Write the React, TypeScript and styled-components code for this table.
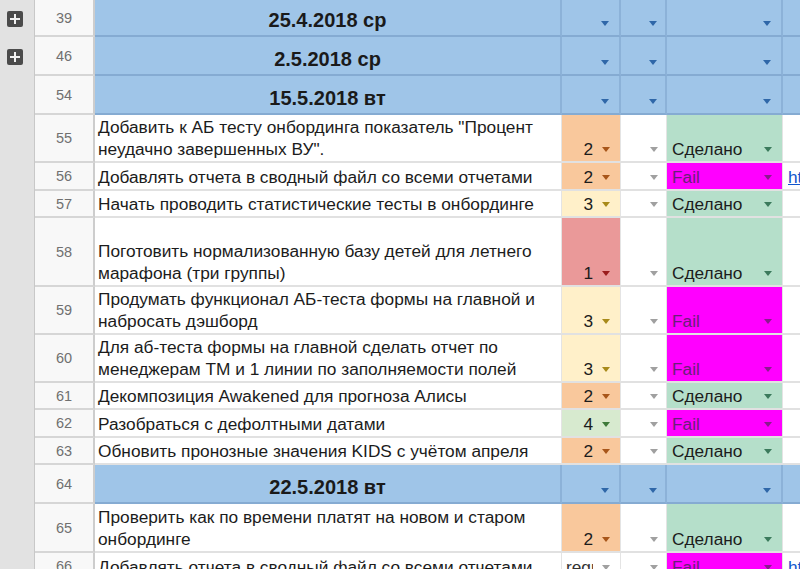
import React from "react";
import styled, { createGlobalStyle } from "styled-components";

const GlobalStyle = createGlobalStyle`
  html, body { margin: 0; padding: 0; background: #ffffff; overflow: hidden; }
  body { font-family: "Liberation Sans", Arial, sans-serif; color: #1c1c1c; }
  * { box-sizing: border-box; }
`;

const COLS = "35px 60px 467px 59px 46px 116px 1fr";

const Sheet = styled.div`
  width: 800px;
  height: 569px;
  overflow: hidden;
  display: flex;
  flex-direction: column;
`;

const Row = styled.div<{ $h: number }>`
  display: grid;
  grid-template-columns: ${COLS};
  height: ${(p) => p.$h}px;
  flex: none;
`;

const Gutter = styled.div`
  background: #e2e2e2;
  border-right: 1px solid #c8c8c8;
  display: flex;
  align-items: center;
  padding-left: 7px;
`;

const PlusButton = styled.div`
  width: 16px;
  height: 16px;
  border-radius: 2px;
  background: #4b4b4b;
  position: relative;
  &::before,
  &::after {
    content: "";
    position: absolute;
    background: #f2f2f2;
    left: 50%;
    top: 50%;
    transform: translate(-50%, -50%);
  }
  &::before { width: 10px; height: 2px; }
  &::after { width: 2px; height: 10px; }
`;

const RowNum = styled.div`
  background: #f8f8f8;
  border-right: 2px solid #cdcdcd;
  border-bottom: 2px solid #d6d6d6;
  color: #707070;
  font-size: 14.5px;
  display: flex;
  align-items: center;
  justify-content: center;
`;

const Cell = styled.div<{ $bg?: string; $blue?: boolean }>`
  background: ${(p) => (p.$blue ? "#9fc5e8" : p.$bg || "#ffffff")};
  border-bottom: 2px solid ${(p) => (p.$blue ? "#85abd2" : "#e1e1e1")};
  border-right: ${(p) => (p.$blue ? "2px solid #8cb2d8" : "1px solid #e4e4e4")};
  font-size: 17.3px;
  line-height: 22px;
  display: flex;
  align-items: flex-end;
  padding-bottom: 1px;
  overflow: hidden;
  min-width: 0;
`;

const TaskCell = styled(Cell)`
  padding-left: 3px;
  padding-right: 4px;
`;

const TaskText = styled.span`
  display: block;
`;

const DateCell = styled(Cell)`
  justify-content: center;
  font-size: 20px;
  line-height: 23px;
  font-weight: bold;
  color: #1a1a1a;
  padding-bottom: 3px;
`;

const PriorityCell = styled(Cell)`
  justify-content: flex-end;
  padding-right: 10px;
  padding-left: 4px;
  gap: 9px;
`;

const PlainCell = styled(Cell)`
  justify-content: flex-end;
  padding-right: 8px;
`;

const StatusCell = styled(Cell)<{ $fail?: boolean }>`
  justify-content: space-between;
  padding-left: 5px;
  padding-right: 10px;
  color: ${(p) => (p.$fail ? "#6a1f78" : "#1c1c1c")};
`;

const LinkCell = styled(Cell)`
  border-right: none;
  padding-left: 5px;
`;

const Link = styled.span`
  color: #1155cc;
  text-decoration: underline;
  white-space: nowrap;
`;

const Clip = styled.span`
  overflow: hidden;
  white-space: nowrap;
  flex: 1;
  min-width: 0;
  color: #333;
`;

const Caret = styled.span<{ $c: string }>`
  flex: none;
  width: 0;
  height: 0;
  border-left: 4.5px solid transparent;
  border-right: 4.5px solid transparent;
  border-top: 5px solid ${(p) => p.$c};
  margin-bottom: 8px;
`;

const BlueCaret = styled(Caret)`
  margin-bottom: 8px;
`;

type Pri = "1" | "2" | "3" | "4" | "reg";

const PRI: Record<Pri, { bg: string; caret: string }> = {
  "1": { bg: "#ea9999", caret: "#9b1c1c" },
  "2": { bg: "#f9c89c", caret: "#a8561a" },
  "3": { bg: "#fff0c9", caret: "#a88a1a" },
  "4": { bg: "#d7eacf", caret: "#3f7a3a" },
  reg: { bg: "#ffffff", caret: "#a0a0a0" },
};

type Status = "done" | "fail";

type Item =
  | { kind: "date"; n: number; h: number; text: string; plus?: boolean }
  | {
      kind: "task";
      n: number;
      h: number;
      text: string;
      pri: Pri;
      status: Status;
      link?: boolean;
    };

const ROWS: Item[] = [
  { kind: "date", n: 39, h: 37, text: "25.4.2018 ср", plus: true },
  { kind: "date", n: 46, h: 39, text: "2.5.2018 ср", plus: true },
  { kind: "date", n: 54, h: 39, text: "15.5.2018 вт" },
  {
    kind: "task",
    n: 55,
    h: 48,
    text: "Добавить к АБ тесту онбординга показатель \"Процент неудачно завершенных ВУ\".",
    pri: "2",
    status: "done",
  },
  { kind: "task", n: 56, h: 28, text: "Добавлять отчета в сводный файл со всеми отчетами", pri: "2", status: "fail", link: true },
  { kind: "task", n: 57, h: 27, text: "Начать проводить статистические тесты в онбординге", pri: "3", status: "done" },
  {
    kind: "task",
    n: 58,
    h: 69,
    text: "Поготовить нормализованную базу детей для летнего марафона (три группы)",
    pri: "1",
    status: "done",
  },
  {
    kind: "task",
    n: 59,
    h: 48,
    text: "Продумать функционал АБ-теста формы на главной и набросать дэшборд",
    pri: "3",
    status: "fail",
  },
  {
    kind: "task",
    n: 60,
    h: 48,
    text: "Для аб-теста формы на главной сделать отчет по менеджерам ТМ и 1 линии по заполняемости полей",
    pri: "3",
    status: "fail",
  },
  { kind: "task", n: 61, h: 27, text: "Декомпозиция Awakened для прогноза Алисы", pri: "2", status: "done" },
  { kind: "task", n: 62, h: 28, text: "Разобраться с дефолтными датами", pri: "4", status: "fail" },
  { kind: "task", n: 63, h: 27, text: "Обновить пронозные значения KIDS с учётом апреля", pri: "2", status: "done" },
  { kind: "date", n: 64, h: 39, text: "22.5.2018 вт" },
  {
    kind: "task",
    n: 65,
    h: 49,
    text: "Проверить как по времени платят на новом и старом онбординге",
    pri: "2",
    status: "done",
  },
  { kind: "task", n: 66, h: 28, text: "Добавлять отчета в сводный файл со всеми отчетами", pri: "reg", status: "fail", link: true },
];

const STATUS: Record<Status, { bg: string; caret: string; label: string }> = {
  done: { bg: "#b5dfca", caret: "#3b7a5c", label: "Сделано" },
  fail: { bg: "#ff00ff", caret: "#8a1a8e", label: "Fail" },
};

function DateRow({ item }: { item: Extract<Item, { kind: "date" }> }) {
  return (
    <Row $h={item.h}>
      <Gutter>{item.plus && <PlusButton />}</Gutter>
      <RowNum>{item.n}</RowNum>
      <DateCell $blue>{item.text}</DateCell>
      <PriorityCell $blue>
        <BlueCaret $c="#2f67a8" />
      </PriorityCell>
      <PlainCell $blue>
        <BlueCaret $c="#2f67a8" />
      </PlainCell>
      <StatusCell $blue>
        <span />
        <BlueCaret $c="#2f67a8" />
      </StatusCell>
      <LinkCell $blue />
    </Row>
  );
}

function TaskRow({ item }: { item: Extract<Item, { kind: "task" }> }) {
  const p = PRI[item.pri];
  const s = STATUS[item.status];
  return (
    <Row $h={item.h}>
      <Gutter />
      <RowNum>{item.n}</RowNum>
      <TaskCell>
        <TaskText>{item.text}</TaskText>
      </TaskCell>
      <PriorityCell $bg={p.bg}>
        {item.pri === "reg" ? <Clip>regular</Clip> : <span>{item.pri}</span>}
        <Caret $c={p.caret} />
      </PriorityCell>
      <PlainCell>
        <Caret $c="#a0a0a0" />
      </PlainCell>
      <StatusCell $bg={s.bg} $fail={item.status === "fail"}>
        <span>{s.label}</span>
        <Caret $c={s.caret} />
      </StatusCell>
      <LinkCell>{item.link && <Link>https://</Link>}</LinkCell>
    </Row>
  );
}

export default function App() {
  return (
    <>
      <GlobalStyle />
      <Sheet>
        {ROWS.map((r) =>
          r.kind === "date" ? <DateRow key={r.n} item={r} /> : <TaskRow key={r.n} item={r} />
        )}
      </Sheet>
    </>
  );
}
